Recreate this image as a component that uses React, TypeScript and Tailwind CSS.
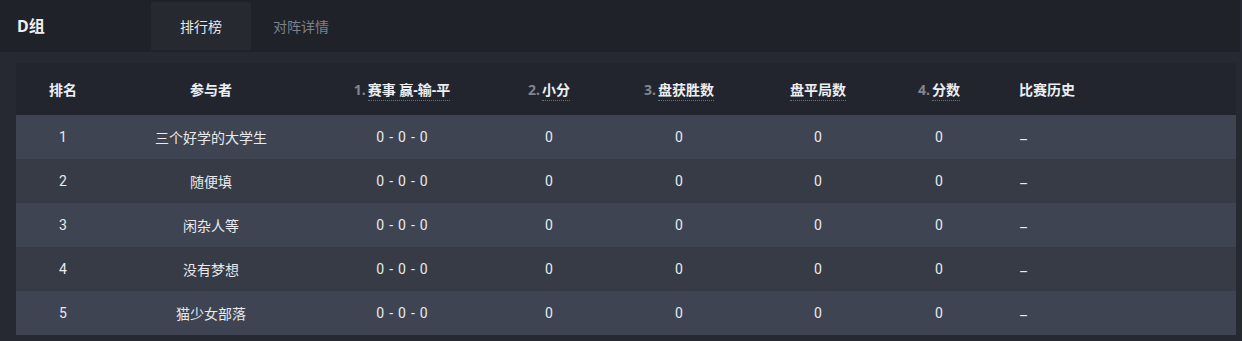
import { useState } from "react";

type Row = { rank: number; name: string };

const ROWS: Row[] = [
  { rank: 1, name: "三个好学的大学生" },
  { rank: 2, name: "随便填" },
  { rank: 3, name: "闲杂人等" },
  { rank: 4, name: "没有梦想" },
  { rank: 5, name: "猫少女部落" },
];

const COLS: { label: string; prefix?: string; tip?: boolean; width: string }[] = [
  { label: "排名", width: "w-[94px]" },
  { label: "参与者", width: "w-[202px]" },
  { label: "赛事 赢-输-平", prefix: "1.", tip: true, width: "w-[180px]" },
  { label: "小分", prefix: "2.", tip: true, width: "w-[114px]" },
  { label: "盘获胜数", prefix: "3.", tip: true, width: "w-[146px]" },
  { label: "盘平局数", tip: true, width: "w-[132px]" },
  { label: "分数", prefix: "4.", tip: true, width: "w-[110px]" },
];

const TABS = ["排行榜", "对阵详情"];

// win - loss - draw, spaced out like the original
function Record() {
  return (
    <span className="inline-flex gap-[5px] font-['Roboto','Noto_Sans_CJK_SC',sans-serif]">
      <span>0</span>
      <span>-</span>
      <span>0</span>
      <span>-</span>
      <span>0</span>
    </span>
  );
}

export default function App() {
  const [tab, setTab] = useState(0);

  return (
    <div className="h-[341px] w-full overflow-hidden bg-[#262931] font-['Noto_Sans','Noto_Sans_CJK_SC',sans-serif] text-[14px] text-[#e8eaee]">
      <div className="mr-[2px] flex h-[52px] items-stretch bg-[#1f2229]">
        <div className="flex w-[151px] items-center pl-[17px] text-[16px] font-bold text-[#eef0f3]">
          D组
        </div>
        <div className="flex py-[2px]">
          {TABS.map((t, i) => (
            <button
              key={t}
              onClick={() => setTab(i)}
              className={`w-[100px] text-[14px] ${
                tab === i ? "bg-[#262930] text-[#e6e8ec]" : "text-[#7c818c]"
              }`}
            >
              {t}
            </button>
          ))}
        </div>
      </div>

      <div className="mx-[16px] mt-[11px] mr-[6px]">
        <table className="w-full table-fixed border-collapse">
          <thead>
            <tr className="h-[52px] bg-[#22252d]">
              {COLS.map((c) => (
                <th key={c.label} className={`${c.width} text-center font-bold`}>
                  {c.prefix && <span className="mr-[2px] text-[#80858f]">{c.prefix}</span>}
                  <span
                    className={
                      c.tip
                        ? "border-b border-dotted border-[#6b707a] pb-[1px] text-[#eceef1]"
                        : "text-[#eceef1]"
                    }
                  >
                    {c.label}
                  </span>
                </th>
              ))}
              <th className="pl-[25px] text-left font-bold text-[#eceef1]">比赛历史</th>
            </tr>
          </thead>
          <tbody>
            {ROWS.map((r, i) => (
              <tr key={r.rank} className={`h-[44px] ${i % 2 === 0 ? "bg-[#3e4451]" : "bg-[#363b46]"}`}>
                <td className="text-center font-['Roboto',sans-serif]">{r.rank}</td>
                <td className="text-center">{r.name}</td>
                <td className="text-center">
                  <Record />
                </td>
                <td className="text-center font-['Roboto',sans-serif]">0</td>
                <td className="text-center font-['Roboto',sans-serif]">0</td>
                <td className="text-center font-['Roboto',sans-serif]">0</td>
                <td className="text-center font-['Roboto',sans-serif]">0</td>
                <td className="pl-[25px] text-left font-['Roboto',sans-serif]">
                  <span className="inline-block translate-y-[3px]">–</span>
                </td>
              </tr>
            ))}
          </tbody>
        </table>
      </div>
    </div>
  );
}
